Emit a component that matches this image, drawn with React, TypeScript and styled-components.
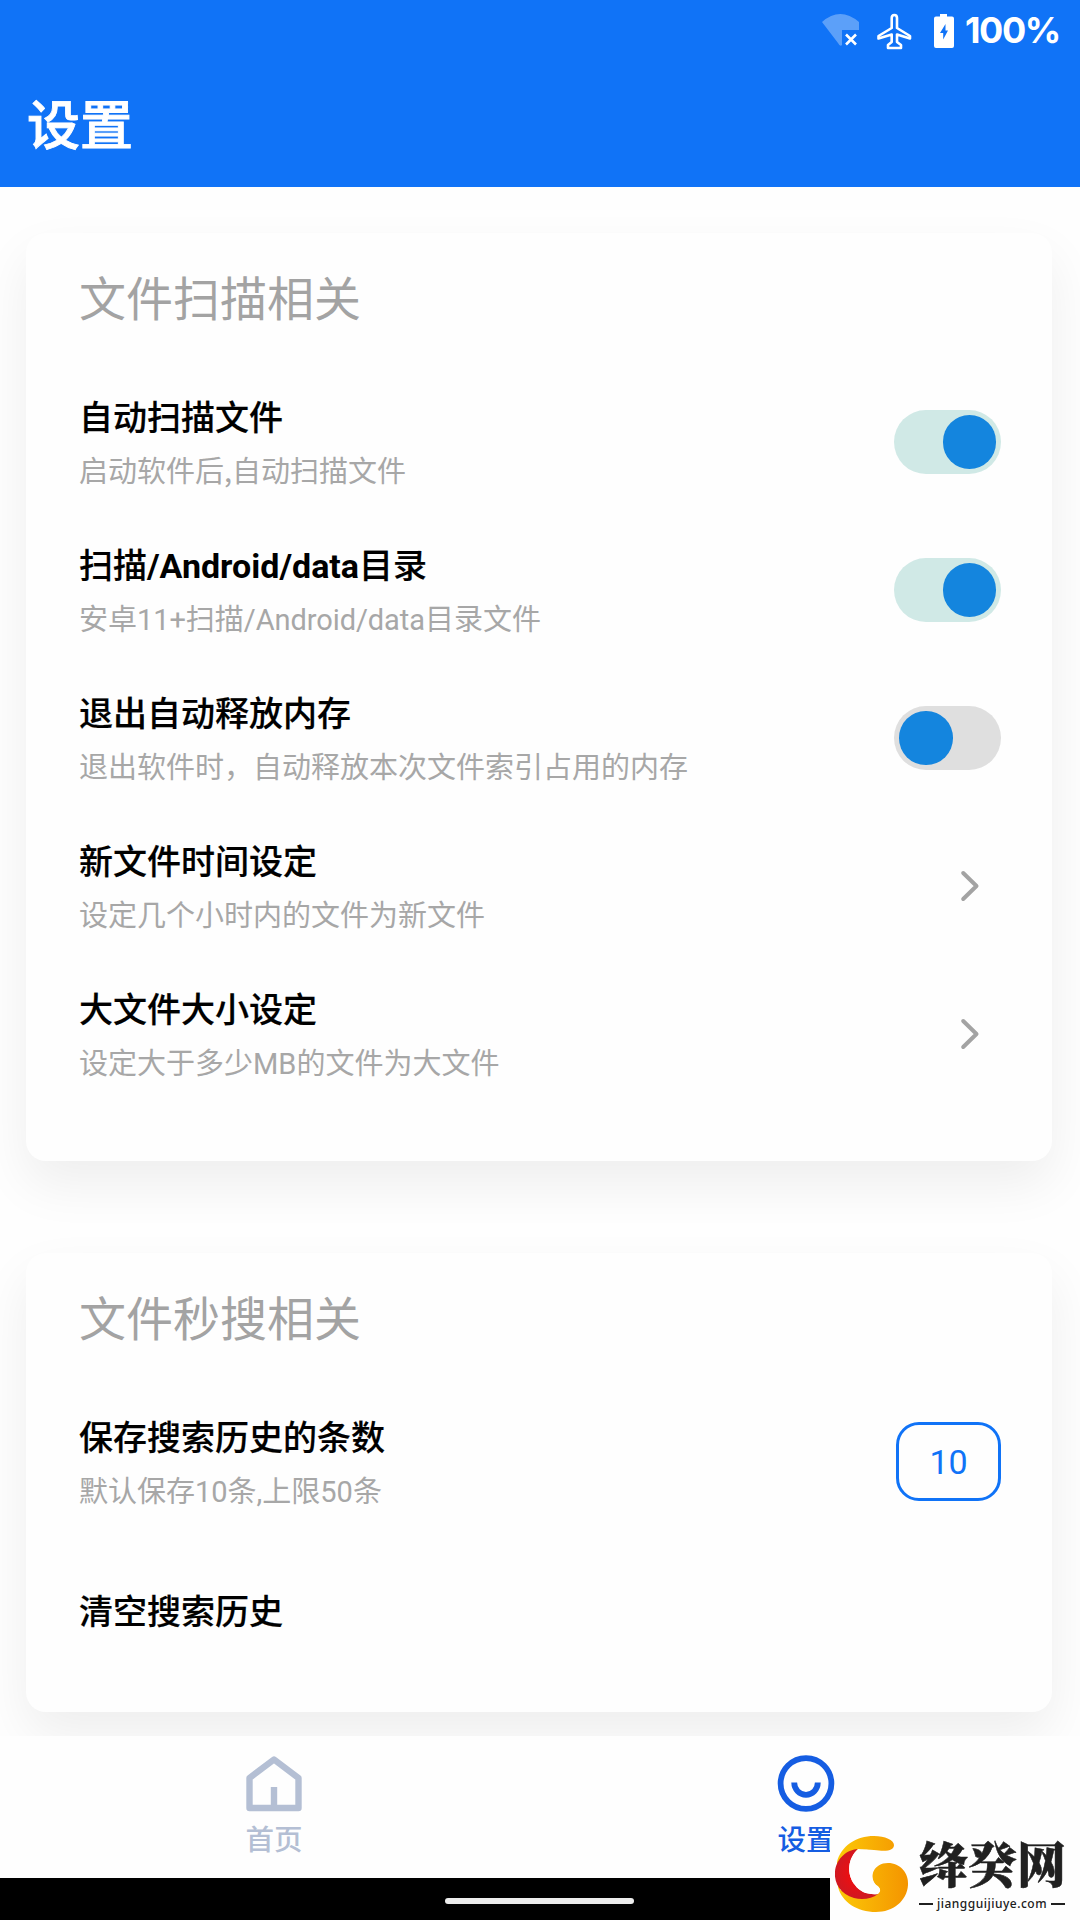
import React from "react";
import styled, { createGlobalStyle } from "styled-components";

const Global = createGlobalStyle`
  * { box-sizing: border-box; }
  body { margin: 0; background: #fff; font-family: Roboto, "Noto Sans CJK SC", sans-serif; }
`;

const Screen = styled.div`
  position: relative;
  width: 1080px;
  height: 1920px;
  display: flex;
  flex-direction: column;
  overflow: hidden;
  background: #fefefe;
`;

const Header = styled.header`
  flex: none;
  height: 187px;
  background: #1073f7;
  color: #fff;
`;

const StatusBar = styled.div`
  height: 61px;
  display: flex;
  justify-content: flex-end;
`;

const BatteryText = styled.span`
  width: 120px;
  padding-left: 5px;
  font: 700 36px/61px Inter, sans-serif;
  letter-spacing: -1.4px;
  white-space: nowrap;
`;

const PageTitle = styled.h1`
  margin: 0;
  padding: 3px 0 0 27px;
  font-size: 53px;
  line-height: 126px;
  font-weight: 500;
  -webkit-text-stroke: 0.9px currentColor;
`;

const Content = styled.main`
  flex: 1;
  min-height: 0;
  overflow: hidden;
  padding: 46px 28px 0 26px;
  display: flex;
  flex-direction: column;
  gap: 92px;
`;

const Card = styled.section<{ $height: number }>`
  flex: none;
  height: ${(p) => p.$height}px;
  border-radius: 20px;
  background: #fefefe;
  padding: 0 51px 0 53px;
  box-shadow: 0 23px 52px rgba(0, 0, 0, 0.068);
`;

const CardTitle = styled.h2`
  margin: 0;
  height: 135px;
  line-height: 133px;
  font-size: 47px;
  font-weight: 400;
  color: #a3a3a3;
`;

const Row = styled.div<{ $height?: number }>`
  height: ${(p) => p.$height ?? 148}px;
  display: flex;
  align-items: center;
  justify-content: space-between;
`;

const RowText = styled.div`
  padding-top: 6px;
`;

const Label = styled.div`
  font-size: 34px;
  line-height: 54px;
  font-weight: 500;
  color: #000;
  -webkit-text-stroke: 0.2px currentColor;
`;

const LatinBold = styled.b`
  font-weight: 700;
  -webkit-text-stroke: 0;
`;

const Hint = styled.div`
  font-size: 29px;
  line-height: 54px;
  color: #a7a7a7;
`;

const Latin = styled.span`
  letter-spacing: -0.08px;
`;

const Comma = styled.span`
  font-family: "Noto Sans CJK SC", sans-serif;
  line-height: 0;
`;

const Toggle = styled.span<{ $on?: boolean }>`
  width: 107px;
  height: 64px;
  padding: 5px;
  border-radius: 32px;
  display: flex;
  justify-content: ${(p) => (p.$on ? "flex-end" : "flex-start")};
  background: ${(p) => (p.$on ? "#d0e9e6" : "#dfdfdf")};
`;

const Thumb = styled.span`
  width: 53.5px;
  height: 53.5px;
  border-radius: 50%;
  background: #1485de;
`;

const Chevron = styled.svg`
  margin-right: 21px;
`;

const CountBox = styled.span`
  width: 105px;
  height: 79px;
  margin-bottom: 1px;
  border: 3px solid #1073f7;
  border-radius: 23px;
  color: #1073f7;
  font-size: 34px;
  line-height: 75px;
  text-align: center;
`;

const Nav = styled.nav`
  flex: none;
  height: 142px;
  padding: 0 8px;
  display: grid;
  grid-template-columns: 1fr 1fr;
  background: #fefefe;
`;

const NavItem = styled.div<{ $color: string }>`
  display: flex;
  flex-direction: column;
  align-items: center;
  padding-top: 18px;
  color: ${(p) => p.$color};
`;

const NavText = styled.span`
  font-size: 28.5px;
  font-weight: 500;
  line-height: 54px;
`;

const HomeArea = styled.footer`
  flex: none;
  height: 42px;
  background: #000;
  padding: 20px 0 0 445px;
`;

const HomeBar = styled.div`
  width: 189px;
  height: 6px;
  border-radius: 3px;
  background: #ececec;
`;

const Watermark = styled.aside`
  position: absolute;
  right: 0;
  bottom: 0;
  width: 250px;
  height: 90px;
  background: #fefefe;
  display: flex;
`;

const BrandText = styled.div`
  padding-left: 1px;
  width: 152px;
  color: #202020;
`;

const BrandName = styled.div`
  font: 900 49px/54px "Noto Serif CJK SC", "Noto Sans CJK SC", serif;
  padding-top: 5px;
  white-space: nowrap;
  -webkit-text-stroke: 0.5px currentColor;
`;

const BrandUrl = styled.div`
  font: 500 12px/16px "Noto Sans", sans-serif;
  letter-spacing: 0.5px;
  display: flex;
  align-items: center;
  justify-content: space-between;
  width: 146px;
  margin-top: 7px;
`;

const Dash = styled.i`
  width: 14px;
  height: 2px;
  background: #202020;
`;

const Arrow = () => (
  <Chevron
    width="20"
    height="32"
    viewBox="0 0 20 32"
    fill="none"
    stroke="#a3a3a3"
    strokeWidth="4"
    strokeLinecap="round"
    strokeLinejoin="round"
  >
    <path d="M3.2 3 L16.5 16 L3.2 29" />
  </Chevron>
);

const settings = [
  { label: "自动扫描文件", hint: <>启动软件后<Comma>,</Comma>自动扫描文件</>, control: "on" },
  {
    label: <>扫描<LatinBold>/Android/data</LatinBold>目录</>,
    hint: <>安卓<Latin>11+</Latin>扫描<Latin>/Android/data</Latin>目录文件</>,
    control: "on",
  },
  { label: "退出自动释放内存", hint: "退出软件时，自动释放本次文件索引占用的内存", control: "off" },
  { label: "新文件时间设定", hint: "设定几个小时内的文件为新文件", control: "link" },
  { label: "大文件大小设定", hint: "设定大于多少MB的文件为大文件", control: "link" },
];

export default function App() {
  return (
    <Screen>
      <Global />
      <Header>
        <StatusBar>
          <svg width="145" height="61" viewBox="815 0 145 61">
            <path d="M822 22 Q840 6 859 22 V30 H842 V45 Q840 47 838 43 Z" fill="#fff" fillOpacity=".32" />
            <path d="M846 34.5 L856 44.5 M856 34.5 L846 44.5" stroke="#fff" strokeWidth="2.6" />
            <path
              d="M891.7 18 Q891.7 15 894.3 15 Q897 15 897 18 V28 L910 36 V38.5 L897 34.5 V42 L901 45 V48 H888 V45 L891.7 42 V34.5 L878.5 38.5 V36 L891.7 28 Z"
              fill="none"
              stroke="#fff"
              strokeWidth="2.6"
              strokeLinejoin="round"
            />
            <path
              fillRule="evenodd"
              d="M940 14 H947 V16.5 H952 Q954 16.5 954 18.5 V46 Q954 48 952 48 H936 Q934 48 934 46 V18.5 Q934 16.5 936 16.5 H940 Z M945.5 24 L940 33 H943.2 V39.5 L948 30.5 H945.5 Z"
              fill="#fff"
            />
          </svg>
          <BatteryText>100%</BatteryText>
        </StatusBar>
        <PageTitle>设置</PageTitle>
      </Header>
      <Content>
        <Card $height={928}>
          <CardTitle>文件扫描相关</CardTitle>
          {settings.map((s, i) => (
            <Row key={i}>
              <RowText>
                <Label>{s.label}</Label>
                <Hint>{s.hint}</Hint>
              </RowText>
              {s.control === "link" ? <Arrow /> : <Toggle $on={s.control === "on"}><Thumb /></Toggle>}
            </Row>
          ))}
        </Card>
        <Card $height={459}>
          <CardTitle>文件秒搜相关</CardTitle>
          <Row>
            <RowText>
              <Label>保存搜索历史的条数</Label>
              <Hint>默认保存10条,上限50条</Hint>
            </RowText>
            <CountBox>10</CountBox>
          </Row>
          <Row $height={146}>
            <RowText>
              <Label>清空搜索历史</Label>
            </RowText>
          </Row>
        </Card>
      </Content>
      <Nav>
        <NavItem $color="#b4bfd4">
          <svg width="60" height="60" viewBox="0 0 60 60" fill="none" stroke="currentColor" strokeWidth="6.4" strokeLinejoin="round">
            <path d="M5.5 24 L30 5.5 L54.5 24 V54 H5.5 Z M30 33 V54" />
          </svg>
          <NavText>首页</NavText>
        </NavItem>
        <NavItem $color="#155de2">
          <svg width="60" height="60" viewBox="0 0 60 60" fill="none" stroke="currentColor" strokeWidth="5.8">
            <circle cx="30" cy="29.5" r="25.4" />
            <path d="M18.2 28.6 A11.8 12.2 0 0 0 41.8 28.6" />
          </svg>
          <NavText>设置</NavText>
        </NavItem>
      </Nav>
      <HomeArea><HomeBar /></HomeArea>
      <Watermark>
        <svg width="88" height="90" viewBox="830 1830 88 90">
          <defs>
            <linearGradient id="gold" x1="0" x2="1"><stop stopColor="#fcc907" /><stop offset="1" stopColor="#f49400" /></linearGradient>
            <radialGradient id="red"><stop stopColor="#f80b0b" /><stop offset="1" stopColor="#cf1822" /></radialGradient>
          </defs>
          <path d="M837 1862 C841 1846 856 1836 874 1836 C885 1836 894 1840 894 1845 C894 1850 888 1852 874 1850 C866 1849 858 1849 850 1854 L840 1890 L875 1895 C882 1892 881 1888 876 1885 C868 1877 874 1863 888 1863 C900 1863 909 1873 908 1885 C907 1901 893 1912 876 1912 C857 1912 842 1902 838 1887 Z" fill="url(#gold)" />
          <path d="M858 1849 C848 1858 846 1874 855 1885 C860 1892 868 1895 878 1894 C872 1899 862 1900 854 1898 C841 1894 834 1884 835 1872 C836 1860 845 1850 858 1849 Z" fill="url(#red)" />
          <path d="M858 1849 C848 1858 846 1874 855 1885 C860 1892 868 1895 878 1894 C882 1891 880 1887 876 1885 C869 1876 873 1867 880 1864 L875 1851 C869 1850 863 1849 858 1849 Z" fill="#fefefe" />
        </svg>
        <BrandText>
          <BrandName>绛癸网</BrandName>
          <BrandUrl><Dash />jiangguijiuye.com<Dash /></BrandUrl>
        </BrandText>
      </Watermark>
    </Screen>
  );
}
